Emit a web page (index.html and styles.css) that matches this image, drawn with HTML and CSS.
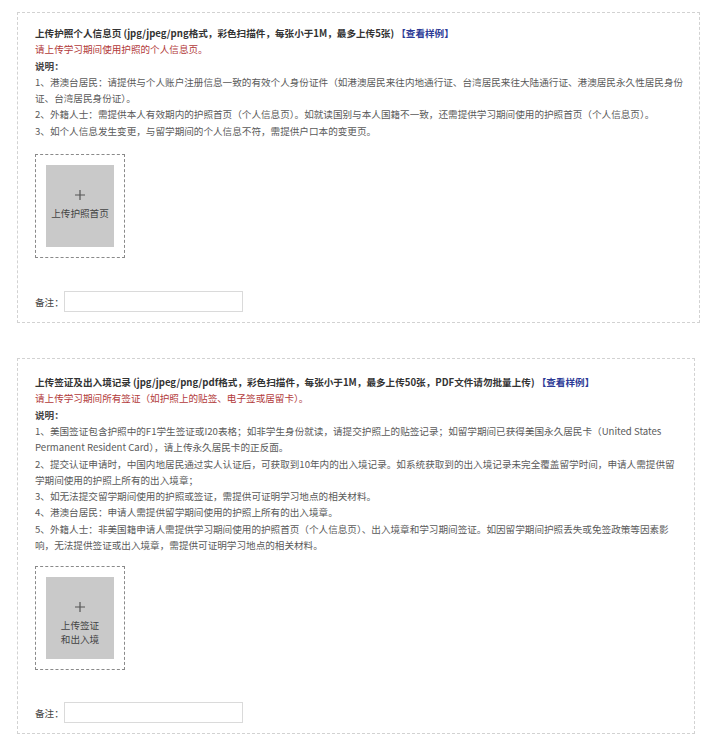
FILE: index.html
```html
<!DOCTYPE html>
<html lang="zh-CN">
<head>
<meta charset="utf-8">
<title>上传材料</title>
<link rel="stylesheet" href="styles.css">
</head>
<body>
<div class="page">
  <section class="panel panel-passport">
    <div class="info">
      <p class="title">上传护照个人信息页 (jpg/jpeg/png格式，彩色扫描件，每张小于1M，最多上传5张) <a class="sample">【查看样例】</a></p>
      <p class="warn">请上传学习期间使用护照的个人信息页。</p>
      <p class="label">说明：</p>
      <p>1、港澳台居民：请提供与个人账户注册信息一致的有效个人身份证件（如港澳居民来往内地通行证、台湾居民来往大陆通行证、港澳居民永久性居民身份证、台湾居民身份证）。</p>
      <p>2、外籍人士：需提供本人有效期内的护照首页（个人信息页）。如就读国别与本人国籍不一致，还需提供学习期间使用的护照首页（个人信息页）。</p>
      <p>3、如个人信息发生变更，与留学期间的个人信息不符，需提供户口本的变更页。</p>
    </div>
    <div class="uploader">
      <div class="upload-tile">
        <svg class="plus" width="10" height="10" viewBox="0 0 10 10"><path d="M5 0V10M0 5H10" stroke="#555" stroke-width="1.2" fill="none"/></svg>
        <span class="tile-text">上传护照首页</span>
      </div>
    </div>
    <div class="remark">
      <span class="remark-label">备注：</span>
      <input class="remark-input" type="text">
    </div>
  </section>

  <section class="panel panel-visa">
    <div class="info">
      <p class="title">上传签证及出入境记录 (jpg/jpeg/png/pdf格式，彩色扫描件，每张小于1M，最多上传50张，PDF文件请勿批量上传) <a class="sample">【查看样例】</a></p>
      <p class="warn">请上传学习期间所有签证（如护照上的贴签、电子签或居留卡）。</p>
      <p class="label">说明：</p>
      <p>1、美国签证包含护照中的F1学生签证或I20表格；如非学生身份就读，请提交护照上的贴签记录；如留学期间已获得美国永久居民卡（United States Permanent Resident Card），请上传永久居民卡的正反面。</p>
      <p>2、提交认证申请时，中国内地居民通过实人认证后，可获取到10年内的出入境记录。如系统获取到的出入境记录未完全覆盖留学时间，申请人需提供留学期间使用的护照上所有的出入境章；</p>
      <p>3、如无法提交留学期间使用的护照或签证，需提供可证明学习地点的相关材料。</p>
      <p>4、港澳台居民：申请人需提供留学期间使用的护照上所有的出入境章。</p>
      <p>5、外籍人士：非美国籍申请人需提供学习期间使用的护照首页（个人信息页）、出入境章和学习期间签证。如因留学期间护照丢失或免签政策等因素影响，无法提供签证或出入境章，需提供可证明学习地点的相关材料。</p>
    </div>
    <div class="uploader">
      <div class="upload-tile">
        <svg class="plus" width="10" height="10" viewBox="0 0 10 10"><path d="M5 0V10M0 5H10" stroke="#555" stroke-width="1.2" fill="none"/></svg>
        <span class="tile-text">上传签证<br>和出入境</span>
      </div>
    </div>
    <div class="remark">
      <span class="remark-label">备注：</span>
      <input class="remark-input" type="text">
    </div>
  </section>
</div>
</body>
</html>
```

FILE: styles.css
```css
html, body {
  margin: 0;
  padding: 0;
  background: #ffffff;
}

body {
  font-family: "Noto Sans CJK SC", "Noto Sans", sans-serif;
  font-size: 9.6px;
  color: #5a5a5a;
}

.page {
  padding-top: 12px;
  padding-bottom: 12px;
}

.panel {
  border: 1px dashed #d2d2d2;
  margin-left: 17px;
  padding: 12px 11px 10px 17px;
}

.panel-passport {
  margin-right: 6px;
}

.panel-visa {
  margin-top: 35px;
  margin-right: 11px;
  padding-top: 15px;
  padding-right: 15px;
}

.info p {
  margin: 0;
  line-height: 16.3px;
}

.info .title {
  font-weight: bold;
  color: #333333;
}

.sample {
  color: #2c3a96;
  font-weight: bold;
  text-decoration: none;
}

.info .warn {
  color: #b23a3a;
}

.info .label {
  font-weight: bold;
  color: #444444;
}

.uploader {
  margin-top: 15px;
}

.panel-visa .uploader {
  margin-top: 13px;
}

.upload-tile {
  width: 68px;
  height: 82px;
  padding: 10px;
  border: 1px dashed #8a8a8a;
  box-sizing: content-box;
  background-clip: content-box;
  background-color: #c9c9c9;
  display: flex;
  flex-direction: column;
  align-items: center;
  color: #444444;
}

.plus {
  display: block;
  margin-top: 25px;
}

.tile-text {
  margin-top: 6px;
  line-height: 14px;
  text-align: center;
  font-size: 9.6px;
}

.remark {
  margin-top: 33px;
  display: flex;
  align-items: center;
}

.panel-visa .remark {
  margin-top: 32px;
}

.remark-label {
  color: #444444;
}

.remark-input {
  width: 177px;
  height: 19px;
  margin: 0;
  padding: 0;
  border: 1px solid #dadada;
  background: #ffffff;
  box-sizing: content-box;
}
```
